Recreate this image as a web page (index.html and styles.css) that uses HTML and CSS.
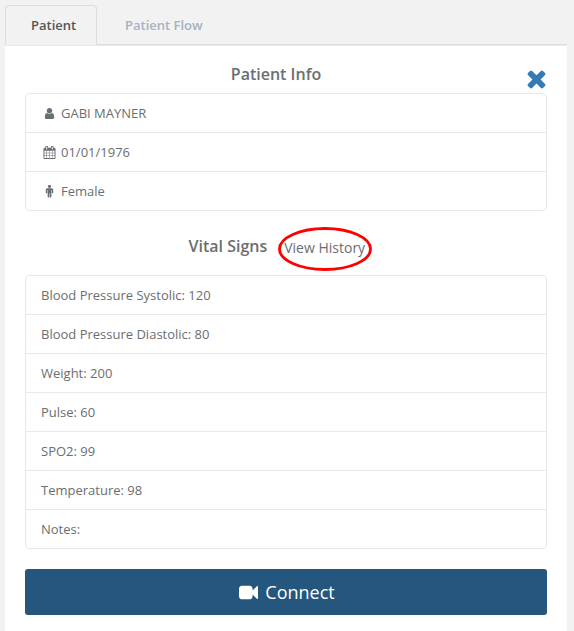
FILE: index.html
```html
<!DOCTYPE html>
<html lang="en">
<head>
<meta charset="utf-8">
<title>Patient</title>
<link rel="stylesheet" href="styles.css">
</head>
<body>
<nav class="tabs">
  <a class="tab active">Patient</a>
  <a class="tab">Patient Flow</a>
</nav>
<main class="panel">
  <header class="panel-head">
    <h2>Patient Info</h2>
    <svg class="close" viewBox="0 0 1792 1792"><path d="M1490 1322q0 40-28 68l-136 136q-28 28-68 28t-68-28l-294-294-294 294q-28 28-68 28t-68-28l-136-136q-28-28-28-68t28-68l294-294-294-294q-28-28-28-68t28-68l136-136q28-28 68-28t68 28l294 294 294-294q28-28 68-28t68 28l136 136q28 28 28 68t-28 68l-294 294 294 294q28 28 28 68z"/></svg>
  </header>
  <ul class="list">
    <li><svg class="icon" viewBox="0 0 1792 1792"><path d="M1536 1399q0 109-62.500 187t-150.500 78h-854q-88 0-150.500-78t-62.500-187q0-85 8.500-160.500t31.500-152 58.500-131 94-89 134.500-34.500q131 128 313 128t313-128q76 0 134.500 34.500t94 89 58.500 131 31.500 152 8.500 160.500zm-256-887q0 159-112.500 271.500t-271.500 112.500-271.500-112.500-112.500-271.500 112.500-271.500 271.500-112.500 271.500 112.500 112.500 271.500z"/></svg>GABI MAYNER</li>
    <li><svg class="icon" viewBox="0 0 1792 1792"><path d="M192 1664h288v-288h-288v288zm352 0h320v-288h-320v288zm-352-352h288v-320h-288v320zm352 0h320v-320h-320v320zm-352-384h288v-288h-288v288zm736 736h320v-288h-320v288zm-384-736h320v-288h-320v288zm768 736h288v-288h-288v288zm-384-352h320v-320h-320v320zm-352-864v-288q0-13-9.500-22.500t-22.500-9.500h-64q-13 0-22.500 9.500t-9.500 22.500v288q0 13 9.500 22.500t22.500 9.500h64q13 0 22.500-9.500t9.500-22.500zm736 864h288v-320h-288v320zm-384-384h320v-288h-320v288zm384 0h288v-288h-288v288zm32-480v-288q0-13-9.500-22.500t-22.500-9.500h-64q-13 0-22.500 9.500t-9.500 22.500v288q0 13 9.500 22.500t22.500 9.500h64q13 0 22.500-9.500t9.500-22.500zm384-64v1280q0 52-38 90t-90 38h-1408q-52 0-90-38t-38-90v-1280q0-52 38-90t90-38h128v-96q0-66 47-113t113-47h64q66 0 113 47t47 113v96h384v-96q0-66 47-113t113-47h64q66 0 113 47t47 113v96h128q52 0 90 38t38 90z"/></svg>01/01/1976</li>
    <li><svg class="icon" viewBox="0 0 1792 1792"><path d="M1408 640v416q0 40-28 68t-68 28-68-28-28-68v-352h-64v912q0 46-33 79t-79 33-79-33-33-79v-464h-64v464q0 46-33 79t-79 33-79-33-33-79v-912h-64v352q0 40-28 68t-68 28-68-28-28-68v-416q0-80 56-136t136-56h640q80 0 136 56t56 136zm-288-448q0 93-65.500 158.500t-158.500 65.500-158.500-65.500-65.500-158.500 65.500-158.500 158.500-65.500 158.500 65.500 65.500 158.500z"/></svg>Female</li>
  </ul>
  <section class="vitals-head">
    <h2>Vital Signs</h2>
    <a class="history">View History<svg class="ring" viewBox="0 0 94 44"><ellipse cx="47" cy="22" rx="45.500" ry="20.500"/></svg></a>
  </section>
  <ul class="list">
    <li>Blood Pressure Systolic: 120</li>
    <li>Blood Pressure Diastolic: 80</li>
    <li>Weight: 200</li>
    <li>Pulse: 60</li>
    <li>SPO2: 99</li>
    <li>Temperature: 98</li>
    <li>Notes:</li>
  </ul>
  <button class="connect"><svg viewBox="0 0 1792 1792"><path d="M1792 352v1088q0 42-39 59-13 5-25 5-27 0-45-19l-403-403v166q0 119-84.500 203.500t-203.500 84.500h-704q-119 0-203.500-84.500t-84.500-203.500v-704q0-119 84.500-203.500t203.500-84.500h704q119 0 203.500 84.500t84.500 203.500v165l403-402q18-19 45-19 12 0 25 5 39 17 39 59z"/></svg>Connect</button>
</main>
</body>
</html>
```
FILE: styles.css
```css
* { box-sizing: border-box; }
body {
  margin: 0;
  padding: 5px 7px 0 5px;
  height: 631px;
  overflow: hidden;
  background: #f2f2f2;
  color: #6b6e70;
  font: 13px/18px "Open Sans", sans-serif;
}
svg { fill: currentColor; }
.tabs {
  display: flex;
  height: 40px;
  border-bottom: 1px solid #dddddd;
}
.tab {
  height: 40px;
  padding: 11px 20px 0 28px;
  color: #a7b1c2;
  font-weight: 600;
}
.tab.active {
  width: 92px;
  padding-left: 25px;
  border: 1px solid #dddddd;
  border-bottom-color: #f2f2f2;
  border-radius: 4px 4px 0 0;
  padding-top: 10px;
  color: #555555;
}
.panel {
  height: 586px;
  padding: 0 20px;
  border-top: 1px solid #e7eaec;
  background: #ffffff;
}
.panel-head {
  position: relative;
  height: 47px;
  padding: 17px 20px 0 0;
  text-align: center;
}
h2 {
  margin: 0;
  font-size: 16px;
  line-height: 22px;
  font-weight: 600;
}
.close {
  position: absolute;
  top: 19px;
  right: -3px;
  width: 27px;
  height: 27px;
  color: #337ab7;
}
.list {
  margin: 0;
  padding: 0;
  list-style: none;
  border: 1px solid #e7eaec;
  border-radius: 4px;
}
.list li {
  display: flex;
  align-items: center;
  height: 39px;
  padding: 0 15px;
  border-bottom: 1px solid #e7eaec;
}
.list li:last-child {
  height: 38px;
  border-bottom: 0;
}
.icon {
  width: 13px;
  height: 13px;
  margin: 0 5.500px 0 1.500px;
}
.vitals-head {
  display: flex;
  height: 64px;
  padding: 24px 0 0 163.500px;
}
.history {
  position: relative;
  height: 20px;
  margin: 3px 0 0 17px;
  font-size: 14px;
  line-height: 20px;
}
.ring {
  position: absolute;
  left: -6.500px;
  top: -11px;
  width: 94px;
  height: 44px;
  fill: none;
  stroke: #ff0000;
  stroke-width: 2.8;
}
.connect {
  display: flex;
  align-items: center;
  justify-content: center;
  gap: 7px;
  width: 100%;
  height: 46px;
  margin: 20px 0 0;
  padding: 0 0 0 2px;
  border: 0;
  border-radius: 3px;
  background: #25567d;
  color: #ffffff;
  font: 18px/24px "Open Sans", sans-serif;
}
.connect svg { width: 19px; height: 19px; }
```
